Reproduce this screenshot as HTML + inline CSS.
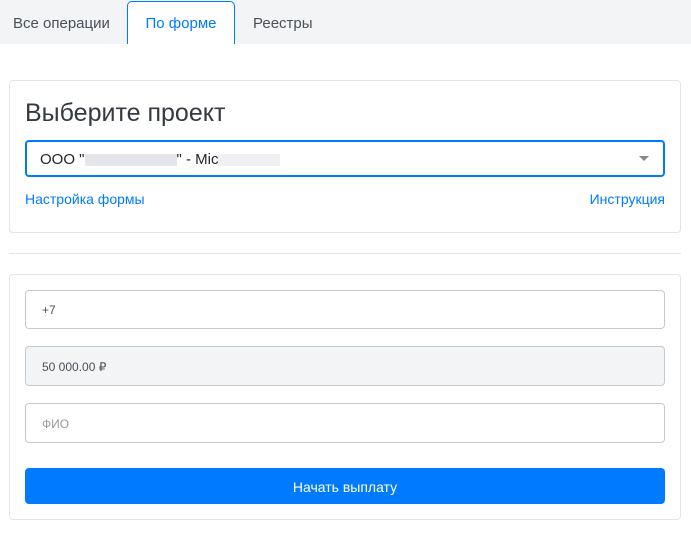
<!DOCTYPE html>
<html><head><meta charset="utf-8"><style>
*{box-sizing:border-box;margin:0;padding:0}
body{width:691px;height:553px;background:#fff;font-family:"Liberation Sans",sans-serif;position:relative;overflow:hidden;color:#212529}
.tabs{position:absolute;left:0;top:0;width:691px;height:44px;background:#f3f4f6}
.tab{position:absolute;top:1px;height:43px;font-size:15px;line-height:46px;color:#495057}
.tab.act{border:1px solid #007bff;border-bottom:none;border-radius:5px 5px 0 0;background:#fff;color:#007bff;text-align:center;line-height:44px}
.card{position:absolute;left:9px;width:672px;border:1px solid #e3e5e8;border-radius:4px}
.inp{position:absolute;left:25px;width:640px;border:1px solid #c5cad1;border-radius:4px;font-size:12px;padding-left:16px;color:#495057}
a{color:#007bff;text-decoration:none;font-size:14px;position:absolute}
</style></head><body>
<div class="tabs">
<div class="tab" style="left:13px">Все операции</div>
<div class="tab act" style="left:127px;width:108px">По форме</div>
<div class="tab" style="left:253px">Реестры</div>
</div>
<div class="card" style="top:80px;height:153px"></div>
<div style="position:absolute;left:25px;top:99px;font-size:25px;color:#343a40">Выберите проект</div>
<div style="position:absolute;left:25px;top:140px;width:640px;height:37px;border:2px solid #007bff;border-radius:4px;font-size:15px;line-height:35px;padding-left:13px;color:#212529">ООО "<span style="display:inline-block;width:92px;height:12px;background:#e3e5ea;vertical-align:middle"></span>" - Mic<span style="display:inline-block;width:62px;height:12px;background:#eef0f3;vertical-align:middle"></span>
<div style="position:absolute;right:14px;top:14px;width:0;height:0;border-left:5px solid transparent;border-right:5px solid transparent;border-top:5px solid #888"></div></div>
<a style="left:25px;top:191px">Настройка формы</a>
<a style="right:26px;top:191px">Инструкция</a>
<div style="position:absolute;left:9px;top:253px;width:672px;height:1px;background:#e3e5e8"></div>
<div class="card" style="top:274px;height:246px"></div>
<div class="inp" style="top:290px;height:39px;line-height:39px">+7</div>
<div class="inp" style="top:346px;height:40px;line-height:40px;background:#f3f4f6">50 000.00 ₽</div>
<div class="inp" style="top:403px;height:40px;line-height:40px;color:#999">ФИО</div>
<div style="position:absolute;left:25px;top:468px;width:640px;height:36px;background:#007bff;border-radius:4px;color:#fff;font-size:14px;line-height:38px;text-align:center">Начать выплату</div>
</body></html>
